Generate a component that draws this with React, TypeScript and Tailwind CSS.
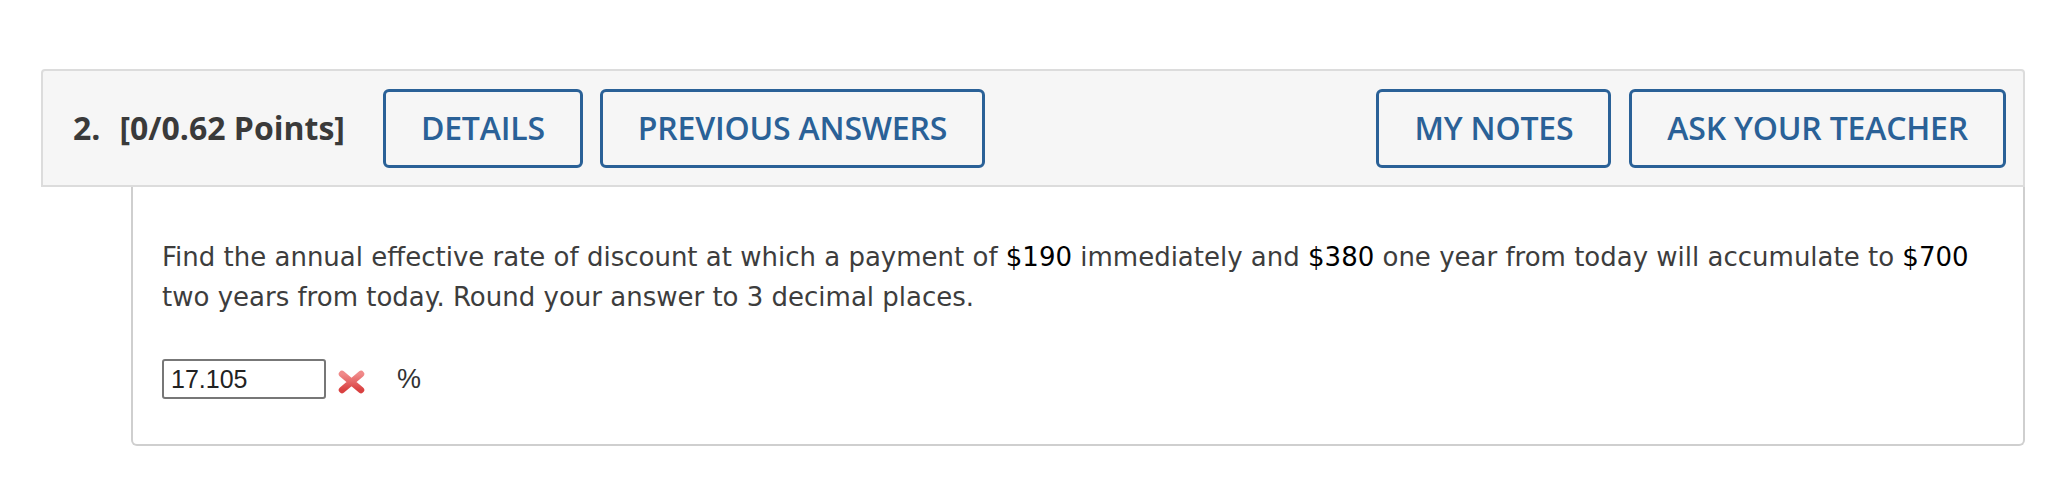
import React from "react";

const buttonClass =
  "h-[79px] flex items-center justify-center px-[35px] border-[3px] border-[#2a6197] rounded-[6px] bg-transparent text-[#2a6197] text-[32px] font-semibold leading-none tracking-[-0.2px]";

function RedCross() {
  return (
    <svg width="27" height="24" viewBox="0 0 27 24" className="shrink-0">
      <defs>
        <linearGradient id="xg" x1="0" y1="0" x2="0" y2="1">
          <stop offset="0" stopColor="#f08a8a" />
          <stop offset="1" stopColor="#d94141" />
        </linearGradient>
      </defs>
      <path d="M4 4 L23 20 M23 4 L4 20" stroke="url(#xg)" strokeWidth="6.5" strokeLinecap="round" fill="none" />
    </svg>
  );
}

export default function App() {
  return (
    <div className="w-full min-h-[496px] bg-white pt-[69px] pl-[41px] pr-[29px]">
      {/* question header */}
      <div
        className="flex items-center h-[118px] bg-[#f6f6f6] border-2 border-[#dcdcdc] rounded-t-[4px] pl-[30px] pr-[17px]"
        style={{ fontFamily: '"Open Sans", sans-serif' }}
      >
        <span className="text-[32px] font-bold text-[#3a3a3a]">2.</span>
        <span className="ml-[19px] text-[32px] font-bold text-[#3a3a3a]">[0/0.62 Points]</span>
        <div className="ml-[38px] flex gap-[17px]">
          <button className={buttonClass}>DETAILS</button>
          <button className={buttonClass}>PREVIOUS ANSWERS</button>
        </div>
        <div className="ml-auto flex gap-[18px]">
          <button className={buttonClass}>MY NOTES</button>
          <button className={buttonClass}>ASK YOUR TEACHER</button>
        </div>
      </div>

      {/* question body */}
      <div className="ml-[90px] border-2 border-t-0 border-[#cfcfcf] rounded-b-[6px] bg-white pt-[50px] pl-[29px] pr-[28px] pb-[44px]">
        <p
          className="text-[26px] leading-[40px] text-[#3d3d3d]"
          style={{ fontFamily: '"DejaVu Sans", Verdana, sans-serif' }}
        >
          Find the annual effective rate of discount at which a payment of <span className="text-black">$190</span>{" "}
          immediately and <span className="text-black">$380</span> one year from today will accumulate to{" "}
          <span className="text-black">$700</span>
          <br />
          two years from today. Round your answer to 3 decimal places.
        </p>
        <div className="mt-[42px] flex items-center" style={{ fontFamily: '"Liberation Sans", Arial, sans-serif' }}>
          <div className="w-[164px] h-[40px] border-2 border-[#777] rounded-[3px] pl-[7px] flex items-center text-[25px] text-[#222]">
            17.105
          </div>
          <div className="ml-[12px] mt-[5px]">
            <RedCross />
          </div>
          <span className="ml-[32px] text-[27px] text-[#333]">%</span>
        </div>
      </div>
    </div>
  );
}
